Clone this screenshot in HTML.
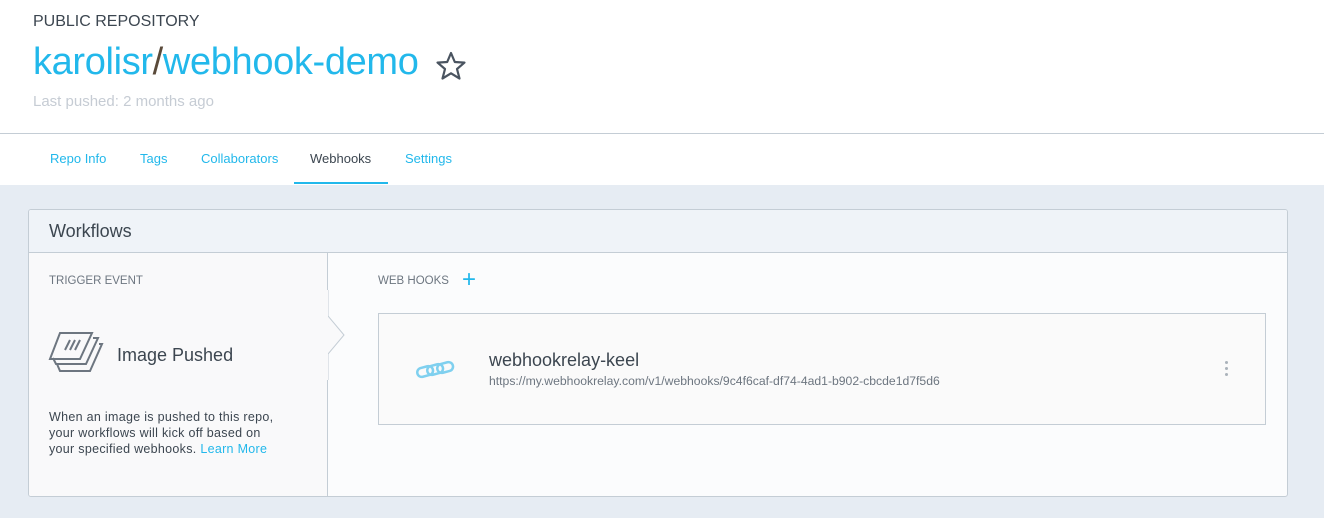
<!DOCTYPE html>
<html><head><style>
*{box-sizing:border-box;margin:0;padding:0}
body{width:1324px;height:518px;overflow:hidden;font-family:"Liberation Sans",sans-serif;background:#e6ecf3;position:relative}
.hdr{position:absolute;left:0;top:0;width:1324px;height:134px;background:#fff;border-bottom:1px solid #c4cdd5}
.pub{position:absolute;left:33px;top:13px;font-size:16px;color:#3c4650}
.title{position:absolute;left:33px;top:41px;font-size:38px;color:#22b8eb;letter-spacing:-0.35px}
.title span{color:#5a4a3a}
.last{position:absolute;left:33px;top:93px;font-size:15px;color:#c6ccd4}
.tabs{position:absolute;left:0;top:134px;width:1324px;height:51px;background:#fff}
.tab{position:absolute;top:17px;font-size:13px;color:#22b8eb}
.ul{position:absolute;left:294px;top:48px;width:94px;height:2px;background:#22b8eb}
.card{position:absolute;left:28px;top:209px;width:1260px;height:288px;border:1px solid #c4cdd5;border-radius:3px;background:#fbfcfd;overflow:hidden}
.ch{height:43px;background:#eff3f8;border-bottom:1px solid #c4cdd5;font-size:18px;color:#3c4650;padding:11px 20px}
.left{position:absolute;left:0;top:43px;width:299px;height:245px;background:#f9f9fa;border-right:1px solid #c4cdd5}
.small{font-size:11.5px;color:#6d7680}
.box{position:absolute;left:349px;top:103px;width:888px;height:112px;border:1px solid #c4cdd5;background:#fafafa}
</style></head><body>
<div class="hdr">
<div class="pub">PUBLIC REPOSITORY</div>
<div class="title">karolisr<span>/</span>webhook-demo</div>
<svg style="position:absolute;left:435px;top:51px" width="32" height="30" viewBox="0 0 32 30"><path d="M16 2 L19.8 11 L29.5 11.6 L22 18 L24.5 27.5 L16 22.3 L7.5 27.5 L10 18 L2.5 11.6 L12.2 11 Z" fill="none" stroke="#4a5460" stroke-width="2.2" stroke-linejoin="round"/></svg>
<div class="last">Last pushed: 2 months ago</div>
</div>
<div class="tabs">
<div class="tab" style="left:50px">Repo Info</div>
<div class="tab" style="left:140px">Tags</div>
<div class="tab" style="left:201px">Collaborators</div>
<div class="tab" style="left:310px;color:#3c4650">Webhooks</div>
<div class="tab" style="left:405px">Settings</div>
<div class="ul"></div>
</div>
<div class="card">
<div class="ch">Workflows</div>
<div class="left">
<div class="small" style="position:absolute;left:20px;top:22px">TRIGGER EVENT</div>
<svg style="position:absolute;left:19px;top:78px" width="56" height="46" viewBox="0 0 56 46"><g fill="none" stroke="#6d7680" stroke-width="2"><path d="M12 2 H44 L32 28 H2 Z"/><path d="M45 7 H50 L38 33 H8 L5 27"/><path d="M51 13 H54 L42 40 H12 L9 33"/><path d="M17 19 L22 9 M22 19 L27 9 M27 19 L32 9"/></g></svg>
<div style="position:absolute;left:88px;top:92px;font-size:18px;color:#3c4650">Image Pushed</div>
<div style="position:absolute;left:20px;top:156px;font-size:12.5px;line-height:16px;color:#3c4650;white-space:nowrap;letter-spacing:0.3px">When an image is pushed to this repo,<br>your workflows will kick off based on<br>your specified webhooks. <span style="color:#22b8eb">Learn More</span></div>
</div>
<svg style="position:absolute;left:298px;top:80px" width="20" height="90" viewBox="0 0 20 90"><path d="M1 0 V26 L17 45 L1 64 V90" fill="#f9f9fa" stroke="#c4cdd5"/><rect x="0" y="0" width="1" height="90" fill="#f9f9fa"/></svg>
<div class="small" style="position:absolute;left:349px;top:65px">WEB HOOKS</div>
<div style="position:absolute;left:433px;top:58px;font-size:24px;color:#22b8eb;line-height:24px">+</div>
<div class="box">
<svg style="position:absolute;left:36px;top:43px" width="40" height="26" viewBox="0 0 40 26"><g fill="none" stroke="#7fd0ef" stroke-width="2.5"><rect x="2" y="10" width="16" height="9" rx="4.5" transform="rotate(-15 10 14)"/><rect x="12" y="8" width="16" height="9" rx="4.5" transform="rotate(-15 20 12)"/><rect x="22" y="6" width="16" height="9" rx="4.5" transform="rotate(-15 30 10)"/></g></svg>
<div style="position:absolute;left:110px;top:36px;font-size:18px;color:#3c4650">webhookrelay-keel</div>
<div style="position:absolute;left:110px;top:60px;font-size:12.2px;color:#6d7680;white-space:nowrap">https://my.webhookrelay.com/v1/webhooks/9c4f6caf-df74-4ad1-b902-cbcde1d7f5d6</div>
<div style="position:absolute;left:846px;top:47px;width:3px"><div style="width:3px;height:3px;border-radius:50%;background:#aab2ba;margin-bottom:3px"></div><div style="width:3px;height:3px;border-radius:50%;background:#aab2ba;margin-bottom:3px"></div><div style="width:3px;height:3px;border-radius:50%;background:#aab2ba"></div></div>
</div>
</div>
</body></html>
